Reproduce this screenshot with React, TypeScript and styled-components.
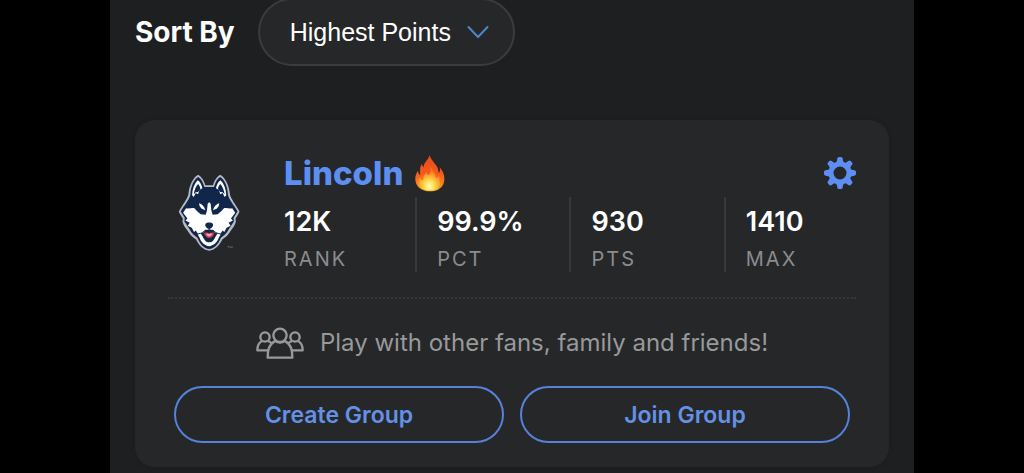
import React from "react";
import styled, { createGlobalStyle } from "styled-components";

const GlobalStyle = createGlobalStyle`
  *, *::before, *::after { box-sizing: border-box; }
  html { background: #000; }
  body {
    margin: 0;
    background: #000;
    color: #fff;
    font-family: Inter, "Liberation Sans", sans-serif;
    -webkit-font-smoothing: antialiased;
  }
`;

const Page = styled.main`
  max-width: 804px;
  min-height: 100vh;
  margin: 0 auto;
  padding: 0 25px 6px;
  background: #1e1f21;
  overflow: hidden;
`;

const SortBar = styled.div`
  display: flex;
  align-items: center;
  gap: 23px;
  margin-top: -2px;
  margin-bottom: 54px;
`;

const SortLabel = styled.label`
  font-size: 28px;
  font-weight: 700;
  line-height: 36px;
`;

const SelectWrap = styled.div`
  display: grid;
  align-items: center;

  > * { grid-area: 1 / 1; }
  > svg { justify-self: end; margin-right: 26px; pointer-events: none; }
`;

const SortSelect = styled.select`
  appearance: none;
  height: 68px;
  padding: 0 61px 0 30px;
  border: 2px solid #3b3c3e;
  border-radius: 34px;
  background: #262729;
  color: #fff;
  font-family: "Liberation Sans", Arial, sans-serif;
  font-size: 25px;
`;

const Card = styled.section`
  padding: 30px 33px 24px;
  border-radius: 20px;
  background: #262729;
  box-shadow: 0 0 4px rgba(0, 0, 0, 0.15);
`;

const Entry = styled.div`
  display: flex;
  gap: 44px;
  padding-left: 10px;
`;

const Logo = styled.svg`
  flex: none;
  width: 62px;
  height: 77px;
  margin-top: 24px;
`;

const EntryBody = styled.div`
  flex: 1;
  min-width: 0;
`;

const NameRow = styled.div`
  display: flex;
  align-items: center;
  justify-content: space-between;
  height: 46px;
  margin-bottom: 1px;
`;

const EntryName = styled.h2`
  display: flex;
  align-items: center;
  gap: 11px;
  margin: 0;
  font-size: 33px;
  font-weight: 800;
  line-height: 42px;
`;

const NameLink = styled.a`
  color: #5d8ff2;
  text-decoration: none;
`;

const IconButton = styled.button`
  display: flex;
  padding: 0;
  border: 0;
  background: none;
  color: #5d8ff2;
  cursor: pointer;
`;

const Stats = styled.dl`
  display: grid;
  grid-template-columns: 131fr 154fr 154fr 132fr;
  margin: 0;
`;

const Stat = styled.div`
  display: flex;
  flex-direction: column-reverse;
  justify-content: flex-end;
  height: 75px;
  padding-top: 8px;

  & + & {
    padding-left: 20px;
    border-left: 2px solid #38393b;
  }
`;

const StatValue = styled.dd`
  margin: 0;
  font-size: 27px;
  font-weight: 600;
  line-height: 34px;
`;

const StatLabel = styled.dt`
  margin-top: 8px;
  color: #8b8c8e;
  font-size: 20px;
  line-height: 24px;
  letter-spacing: 2px;
`;

const Divider = styled.hr`
  margin: 25px 0 0;
  border: 0;
  border-top: 2px dotted #36373a;
`;

const Invite = styled.p`
  display: flex;
  align-items: center;
  justify-content: center;
  gap: 16px;
  margin: 27px 0 26px;
  color: #98999b;
  font-size: 24px;
  line-height: 34px;
`;

const Actions = styled.div`
  display: grid;
  grid-template-columns: 1fr 1fr;
  gap: 16px;
  padding: 0 6px;
`;

const PillButton = styled.button`
  height: 57px;
  padding: 0;
  border: 2px solid #5682da;
  border-radius: 29px;
  background: transparent;
  color: #6490e6;
  font-family: inherit;
  font-size: 23px;
  font-weight: 600;
  cursor: pointer;
`;

const Chevron = () => (
  <svg width="22" height="14" viewBox="0 0 22 14" fill="none" stroke="#4b86cf" strokeWidth="2" strokeLinecap="round" strokeLinejoin="round" aria-hidden="true">
    <path d="M1.5 2 11 12 20.5 2" />
  </svg>
);

const Flame = () => (
  <svg width="32" height="38" viewBox="0 0 96 114" role="img" aria-label="Fire">
    <defs>
      <linearGradient id="flame" x1="0" y1="0" x2="0" y2="1">
        <stop offset="0" stopColor="#ed4b1c" />
        <stop offset="0.5" stopColor="#f4581c" />
        <stop offset="1" stopColor="#fba51c" />
      </linearGradient>
      <radialGradient id="ember" cx="0.5" cy="0.82" r="0.62">
        <stop offset="0" stopColor="#fffbc2" />
        <stop offset="0.4" stopColor="#ffdb4a" />
        <stop offset="1" stopColor="#f7791c" />
      </radialGradient>
    </defs>
    <path fill="url(#flame)" d="M47 3C49 16 62 25 70 40C73 47 74 53 74 58C78 54 79 47 77 40C86 50 92 62 91 77C90 99 72 112 48 112C23 112 5 98 4 77C3 65 7 57 12 50C13 57 15 61 19 64C18 51 17 38 24 29C25 34 26 37 29 40C29 24 43 19 47 3Z" />
    <path fill="url(#ember)" d="M49 37C54 49 64 55 65 69C67 76 72 70 73 64C80 76 81 89 75 98C69 107 60 110 48 110C32 110 19 104 14 91C11 83 14 74 18 69C20 76 24 79 28 79C26 66 34 59 39 54C39 59 41 63 44 64C50 57 51 47 49 37Z" />
  </svg>
);

const Gear = () => (
  <svg width="32" height="32" viewBox="-16 -16 32 32" fill="currentColor" aria-hidden="true">
    <circle r="9" fill="none" stroke="currentColor" strokeWidth="5" />
    {[0, 45, 90, 135, 180, 225, 270, 315].map((angle) => (
      <path key={angle} transform={`rotate(${angle})`} d="M-4.4-9.5C-3.2-11.2-2.9-12.6-2.7-14.4Q-2.4-16-1-16H1Q2.4-16 2.7-14.4C2.9-12.6 3.2-11.2 4.4-9.5Z" />
    ))}
  </svg>
);

const People = () => (
  <svg width="48" height="32" viewBox="30 37 144 96" fill="none" stroke="currentColor" strokeWidth="7" strokeLinejoin="round" aria-hidden="true">
    <circle cx="102" cy="62" r="20" />
    <path d="M65 129C65 106 68 91 87 79Q102 88 117 79C136 91 139 106 139 129Z" />
    <circle cx="57" cy="67" r="14" />
    <path d="M66 107H34C34 93 38 84 48 79M66 79Q73 82 78 87" />
    <circle cx="147" cy="67" r="14" />
    <path d="M138 107H170C170 93 166 84 156 79M138 79Q131 82 126 87" />
  </svg>
);

const HuskyHalf = () => (
  <>
    <path fill="#b5bac5" d="M132 74H120C117 62 108 46 98 42C84 50 71 73 69 101C66 115 52 131 40 153C43 162 48 168 52 174L51 184C55 197 61 204 66 210C75 226 84 231 92 237C101 256 115 269 132 271Z" />
    <path fill="#10264a" d="M132 79H117C113 65 107 54 98 49C85 58 76 77 75 102C72 118 57 134 46 153L58 172L57 183L72 206C79 220 87 225 96 232C104 252 116 264 132 266Z" />
    <path fill="#fff" d="M97 59C87 69 81 84 80 104L85 109L91 97L98 101L102 88L111 83C109 73 104 63 97 59Z" />
    <path fill="#10264a" d="M98 70C91 77 87 89 85 101L91 95L98 94L105 85C104 79 102 74 98 70Z" />
    <path fill="#fff" d="M132 124L127 130L125 149L121 163L106 161L96 153L87 143C79 141 71 145 62 143L53 157L66 174L60 180L73 187L67 196L79 202L86 215L91 210L97 219C108 218 114 214 120 208H132Z" />
    <path fill="#fff" d="M101 128C109 130 117 137 120 149L108 144Q101 138 101 128Z" />
    <path fill="#fff" d="M97 222C105 221 111 217 117 213C119 227 124 237 132 240V258C118 256 107 246 103 233Z" />
    <path fill="#10264a" d="M132 186C123 185 118 190 120 196C122 202 127 205 132 206Z" />
    <path fill="#10264a" d="M132 206L129 207C123 215 111 216 105 219C110 222 112 230 118 239C122 245 127 246 132 246Z" />
    <path fill="#d5394c" d="M132 219C127 216 121 216 116 218C119 229 125 233 132 233Z" />
    <path fill="#f4a5ab" d="M132 221C128 218 124 219 122 221C125 226 128 228 132 228Z" />
  </>
);

const Husky = () => (
  <Logo viewBox="38 40 186 232" overflow="visible" role="img" aria-label="Huskies">
    <HuskyHalf />
    <g transform="translate(263 0) scale(-1 1)">
      <HuskyHalf />
    </g>
    <path d="M187 258H193M190 258V263M195 263V258L198 262L201 258V263" fill="none" stroke="#a5a6a8" strokeWidth="1" />
  </Logo>
);

const stats = [
  { label: "RANK", value: "12K" },
  { label: "PCT", value: "99.9%" },
  { label: "PTS", value: "930" },
  { label: "MAX", value: "1410" },
];

export default function App() {
  return (
    <>
      <GlobalStyle />
      <Page>
        <SortBar>
          <SortLabel htmlFor="sort">Sort By</SortLabel>
          <SelectWrap>
            <SortSelect id="sort" defaultValue="highest">
              <option value="highest">Highest Points</option>
            </SortSelect>
            <Chevron />
          </SelectWrap>
        </SortBar>
        <Card>
          <Entry>
            <Husky />
            <EntryBody>
              <NameRow>
                <EntryName>
                  <NameLink href="#entry">Lincoln</NameLink>
                  <Flame />
                </EntryName>
                <IconButton type="button" aria-label="Settings">
                  <Gear />
                </IconButton>
              </NameRow>
              <Stats>
                {stats.map((stat) => (
                  <Stat key={stat.label}>
                    <StatLabel>{stat.label}</StatLabel>
                    <StatValue>{stat.value}</StatValue>
                  </Stat>
                ))}
              </Stats>
            </EntryBody>
          </Entry>
          <Divider />
          <Invite>
            <People />
            Play with other fans, family and friends!
          </Invite>
          <Actions>
            <PillButton type="button">Create Group</PillButton>
            <PillButton type="button">Join Group</PillButton>
          </Actions>
        </Card>
      </Page>
    </>
  );
}
